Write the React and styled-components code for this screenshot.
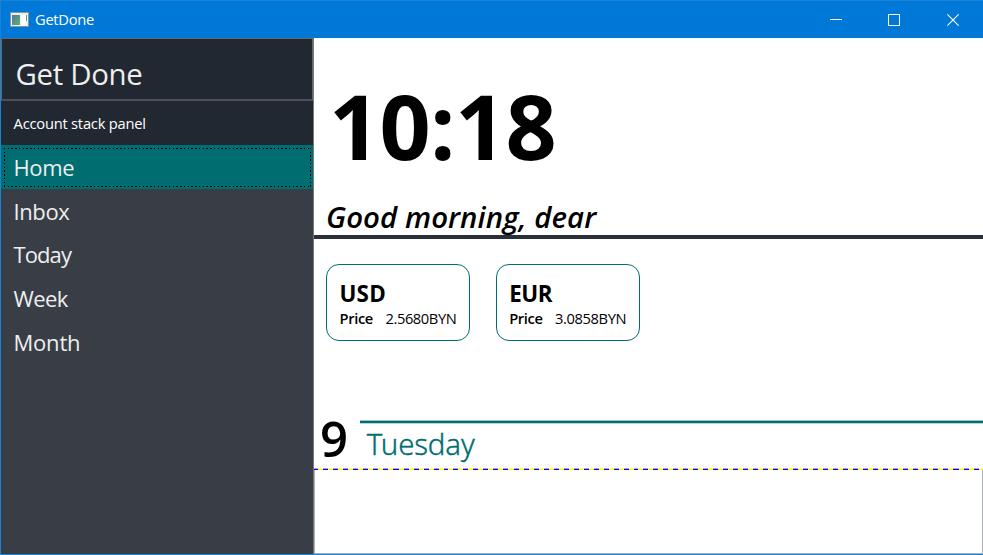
import React from 'react';
import styled, { createGlobalStyle } from 'styled-components';

const GlobalStyle = createGlobalStyle`
  * { box-sizing: border-box; }
  body { margin: 0; background: #fff; font-family: "Open Sans", "Noto Sans", sans-serif; overflow: hidden; }
`;

const Window = styled.div`
  width: 983px;
  height: 555px;
  display: flex;
  flex-direction: column;
  background: #fff;
  border-left: 1px solid #1883d7;
  border-bottom: 1px solid #1883d7;
`;

const TitleBar = styled.header`
  height: 38px;
  flex: none;
  display: flex;
  align-items: center;
  background: #0078d7;
  border-top: 1px solid #1883d7;
  color: #fff;
  padding: 0 1px 0 9px;
`;

const AppTitle = styled.h1`
  flex: 1;
  margin: 0 0 1px 5px;
  font-size: 14.7px;
  line-height: 20px;
  font-weight: 400;
  letter-spacing: -0.28px;
`;

const WindowButton = styled.button`
  width: 58.5px;
  height: 37px;
  padding: 0;
  border: 0;
  background: none;
  color: #fff;
  display: flex;
  align-items: center;
  justify-content: center;
`;

const Body = styled.div`
  flex: 1;
  min-height: 0;
  display: flex;
`;

const Sidebar = styled.aside`
  width: 313px;
  flex: none;
  display: flex;
  flex-direction: column;
  background: #393e46;
  border-right: 1px solid #77797d;
  color: #eee;
`;

const Brand = styled.div`
  height: 63px;
  flex: none;
  background: #222831;
  border: 1px solid #666769;
  border-bottom: 2px solid #4d5157;
  padding: 15px 0 0 13.6px;
  font-size: 29.4px;
  line-height: 40px;
  letter-spacing: -0.35px;
`;

const Account = styled.div`
  height: 44px;
  flex: none;
  background: #222831;
  color: #fff;
  padding: 12px 0 0 12.6px;
  font-size: 14.7px;
  line-height: 20px;
  letter-spacing: -0.22px;
`;

const Nav = styled.nav`
  display: flex;
  flex-direction: column;
`;

const NavItem = styled.a`
  height: 43.65px;
  display: flex;
  padding: 3px 2px 2px 3px;
  background: ${(p) => (p.$active ? '#006d70' : 'transparent')};
`;

const dots = (angle) => `repeating-linear-gradient(${angle}, #000 0 1.5px, transparent 1.5px 3.75px)`;

const NavLabel = styled.span`
  flex: 1;
  padding-left: 9.5px;
  background: ${(p) =>
    p.$active
      ? `${dots('90deg')} top / 100% 1px no-repeat,
         ${dots('90deg')} bottom / 100% 1px no-repeat,
         ${dots('180deg')} left / 1px 100% no-repeat,
         ${dots('180deg')} right / 1px 100% no-repeat`
      : 'none'};
  font-size: 22px;
  line-height: 38.2px;
  letter-spacing: ${(p) => p.$spacing}px;
`;

const Main = styled.main`
  flex: 1;
  min-width: 0;
  display: flex;
  flex-direction: column;
`;

const Hero = styled.section`
  height: 201px;
  flex: none;
  border-bottom: 4px solid #2a3039;
`;

const Clock = styled.div`
  padding: 28px 0 0 15px;
  height: 159px;
  font-size: 89.6px;
  font-weight: 700;
  line-height: 118px;
  letter-spacing: -0.7px;
  color: #000;
`;

const Greeting = styled.div`
  padding: 1px 0 0 12px;
  font-size: 29.4px;
  font-style: italic;
  font-weight: 600;
  line-height: 38px;
  letter-spacing: 0.05px;
  white-space: nowrap;
`;

const Rates = styled.section`
  height: 181px;
  flex: none;
  display: flex;
  gap: 25.4px;
  padding: 25px 0 0 12px;
`;

const RateCard = styled.article`
  width: 144.3px;
  height: 77px;
  border: 1.25px solid #006d70;
  border-radius: 13px;
  padding: 14px 0 0 12.5px;
  color: #000;
`;

const Currency = styled.h2`
  margin: 0 0 -1px;
  font-size: 22.4px;
  font-weight: 700;
  line-height: 30px;
  letter-spacing: ${(p) => p.$spacing}px;
`;

const PriceRow = styled.div`
  display: flex;
  gap: 12.5px;
  font-size: 14.7px;
  line-height: 20px;
`;

const PriceLabel = styled.span`
  font-weight: 600;
  letter-spacing: -0.36px;
`;

const PriceValue = styled.span`
  letter-spacing: -0.4px;
`;

const DayHeader = styled.section`
  height: 48px;
  flex: none;
  display: flex;
`;

const DayNumber = styled.div`
  width: 46px;
  padding: 1px 0 0 6px;
  font-size: 49px;
  font-weight: 600;
  line-height: 35px;
  color: #000;
`;

const DayName = styled.div`
  flex: 1;
  padding: 4px 0 0 6.8px;
  background: linear-gradient(#99c5c6 0 1px, #006d70 1px 3px, #b8d7d8 3px) top / 100% 4px no-repeat;
  font-family: "Noto Sans", "Open Sans", sans-serif;
  font-size: 29.4px;
  font-weight: 300;
  line-height: 41px;
  letter-spacing: -0.15px;
  -webkit-text-stroke: 0.35px #006d70;
  color: #006d70;
`;

const TaskArea = styled.section`
  flex: 1;
  display: flex;
  flex-direction: column;
`;

const DashedRule = styled.div`
  height: 2px;
  background:
    linear-gradient(rgba(255, 255, 255, 0.65) 0 1px, transparent 1px),
    repeating-linear-gradient(90deg, #0000ff 0 4.5px, #ffff00 4.5px 9.5px, #0000ff 9.5px 10px);
`;

const TaskList = styled.div`
  flex: 1;
  border: 1px solid #abadb3;
  border-top: 0;
`;

const navItems = [
  { label: 'Home', spacing: -0.35, active: true },
  { label: 'Inbox', spacing: -0.4 },
  { label: 'Today', spacing: -0.9 },
  { label: 'Week', spacing: -0.6 },
  { label: 'Month', spacing: -0.2 },
];

const rates = [
  { code: 'USD', price: '2.5680BYN', spacing: 0.2 },
  { code: 'EUR', price: '3.0858BYN', spacing: -0.4 },
];

const AppIcon = () => (
  <svg width="20" height="16" viewBox="0 0 20 16">
    <defs>
      <linearGradient id="pane" x1="0" y1="0" x2="1" y2="1">
        <stop offset="0" stopColor="#4a7ba5" />
        <stop offset="1" stopColor="#62b070" />
      </linearGradient>
    </defs>
    <rect x="0.5" y="0.5" width="18" height="14" fill="#eef0f0" stroke="#8d949b" />
    <rect x="2" y="3" width="8" height="10" fill="url(#pane)" />
    <rect x="11" y="3" width="5" height="10" fill="#fff" />
    <rect x="16" y="3" width="1" height="6" fill="#62a080" />
  </svg>
);

export default function App() {
  return (
    <>
      <GlobalStyle />
      <Window>
        <TitleBar>
          <AppIcon />
          <AppTitle>GetDone</AppTitle>
          <WindowButton aria-label="Minimize">
            <svg width="12" height="12"><path d="M0 5.5H12" stroke="currentColor" /></svg>
          </WindowButton>
          <WindowButton aria-label="Maximize">
            <svg width="12" height="12"><rect x=".5" y=".5" width="11" height="11" fill="none" stroke="currentColor" /></svg>
          </WindowButton>
          <WindowButton aria-label="Close">
            <svg width="12" height="12"><path d="M.4 .4L11.6 11.6M11.6 .4L.4 11.6" stroke="currentColor" strokeWidth="1.1" /></svg>
          </WindowButton>
        </TitleBar>
        <Body>
          <Sidebar>
            <Brand>Get Done</Brand>
            <Account>Account stack panel</Account>
            <Nav>
              {navItems.map((item) => (
                <NavItem key={item.label} $active={item.active}>
                  <NavLabel $active={item.active} $spacing={item.spacing}>{item.label}</NavLabel>
                </NavItem>
              ))}
            </Nav>
          </Sidebar>
          <Main>
            <Hero>
              <Clock>10:18</Clock>
              <Greeting>Good morning, dear</Greeting>
            </Hero>
            <Rates>
              {rates.map((rate) => (
                <RateCard key={rate.code}>
                  <Currency $spacing={rate.spacing}>{rate.code}</Currency>
                  <PriceRow>
                    <PriceLabel>Price</PriceLabel>
                    <PriceValue>{rate.price}</PriceValue>
                  </PriceRow>
                </RateCard>
              ))}
            </Rates>
            <DayHeader>
              <DayNumber>9</DayNumber>
              <DayName>Tuesday</DayName>
            </DayHeader>
            <TaskArea>
              <DashedRule />
              <TaskList />
            </TaskArea>
          </Main>
        </Body>
      </Window>
    </>
  );
}
